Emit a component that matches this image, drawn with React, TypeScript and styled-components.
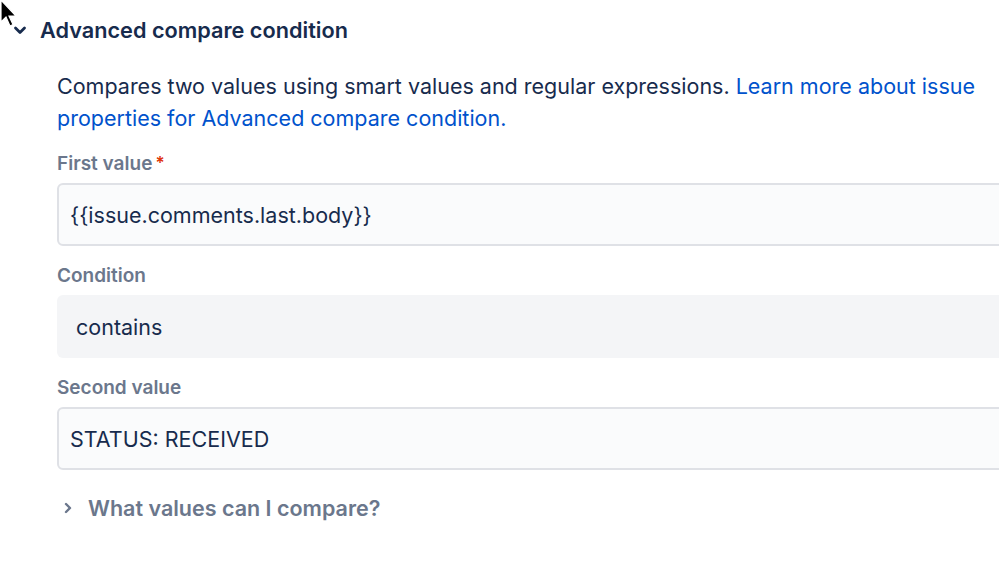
import React from "react";
import styled, { createGlobalStyle } from "styled-components";

const GlobalStyle = createGlobalStyle`
  html, body {
    margin: 0;
    padding: 0;
    background: #ffffff;
    overflow: hidden;
  }
  body {
    font-family: Inter, "Noto Sans", "Liberation Sans", sans-serif;
    color: #172b4d;
    -webkit-font-smoothing: antialiased;
  }
`;

const Page = styled.div`
  position: relative;
  width: 999px;
  height: 577px;
  overflow: hidden;
  padding: 13px 0 0 12px;
  box-sizing: border-box;
`;

const Header = styled.div`
  display: flex;
  align-items: center;
  gap: 12px;
  height: 34px;
`;

const Title = styled.h2`
  margin: 0;
  font-size: 21.7px;
  font-weight: 600;
  color: #172b4d;
`;

const Body = styled.div`
  padding: 23px 0 0 45px;
  width: 1000px;
`;

const Description = styled.p`
  margin: 0;
  width: 930px;
  font-size: 21.5px;
  line-height: 32px;
  color: #172b4d;
`;

const Link = styled.a`
  color: #0052cc;
  text-decoration: none;
`;

const Field = styled.div`
  display: flex;
  flex-direction: column;
`;

const Label = styled.label`
  display: flex;
  align-items: center;
  gap: 3px;
  margin-top: 16px;
  height: 26px;
  font-size: 19px;
  font-weight: 600;
  color: #6b778c;
`;

const Required = styled.span`
  color: #de350b;
  font-size: 17px;
`;

const Input = styled.div`
  margin-top: 7px;
  height: 63px;
  box-sizing: border-box;
  border: 2.5px solid #dfe1e6;
  border-radius: 6px;
  background: #fafbfc;
  display: flex;
  align-items: center;
  padding-left: 11px;
  font-size: 21.5px;
  color: #172b4d;
`;

const Select = styled.div`
  margin-top: 7px;
  height: 63px;
  box-sizing: border-box;
  border-radius: 6px;
  background: #f4f5f7;
  display: flex;
  align-items: center;
  padding-left: 19px;
  font-size: 21.5px;
  color: #172b4d;
`;

const Disclosure = styled.div`
  display: flex;
  align-items: center;
  gap: 14px;
  margin-top: 25px;
  padding-left: 5px;
  font-size: 21.5px;
  font-weight: 600;
  color: #6b778c;
`;

const Cursor = styled.svg`
  position: absolute;
  left: 0;
  top: 0;
`;

const ChevronDown = () => (
  <svg width="16" height="16" viewBox="0 0 16 16">
    <path d="M3.5 6 L8 10.5 L12.5 6" fill="none" stroke="#172b4d" strokeWidth="2.8" strokeLinecap="round" strokeLinejoin="round" />
  </svg>
);

const ChevronRight = () => (
  <svg width="12" height="14" viewBox="0 0 12 14">
    <path d="M4 3 L8 7 L4 11" fill="none" stroke="#6b778c" strokeWidth="2.4" strokeLinecap="round" strokeLinejoin="round" />
  </svg>
);

export default function App() {
  return (
    <>
      <GlobalStyle />
      <Page>
        <Header>
          <ChevronDown />
          <Title>Advanced compare condition</Title>
        </Header>
        <Body>
          <Description>
            Compares two values using smart values and regular expressions.{" "}
            <Link href="#">Learn more about issue properties for Advanced compare condition.</Link>
          </Description>
          <Field>
            <Label>
              First value<Required>*</Required>
            </Label>
            <Input>{"{{issue.comments.last.body}}"}</Input>
          </Field>
          <Field>
            <Label>Condition</Label>
            <Select>contains</Select>
          </Field>
          <Field>
            <Label>Second value</Label>
            <Input>STATUS: RECEIVED</Input>
          </Field>
          <Disclosure>
            <ChevronRight />
            What values can I compare?
          </Disclosure>
        </Body>
        <Cursor width="20" height="30" viewBox="0 0 20 30">
          <path d="M1 0 L1 22 L6 17 L10 26 L13 24.5 L9 16 L16 16 Z" fill="#000" stroke="#fff" strokeWidth="1.2" />
        </Cursor>
      </Page>
    </>
  );
}
